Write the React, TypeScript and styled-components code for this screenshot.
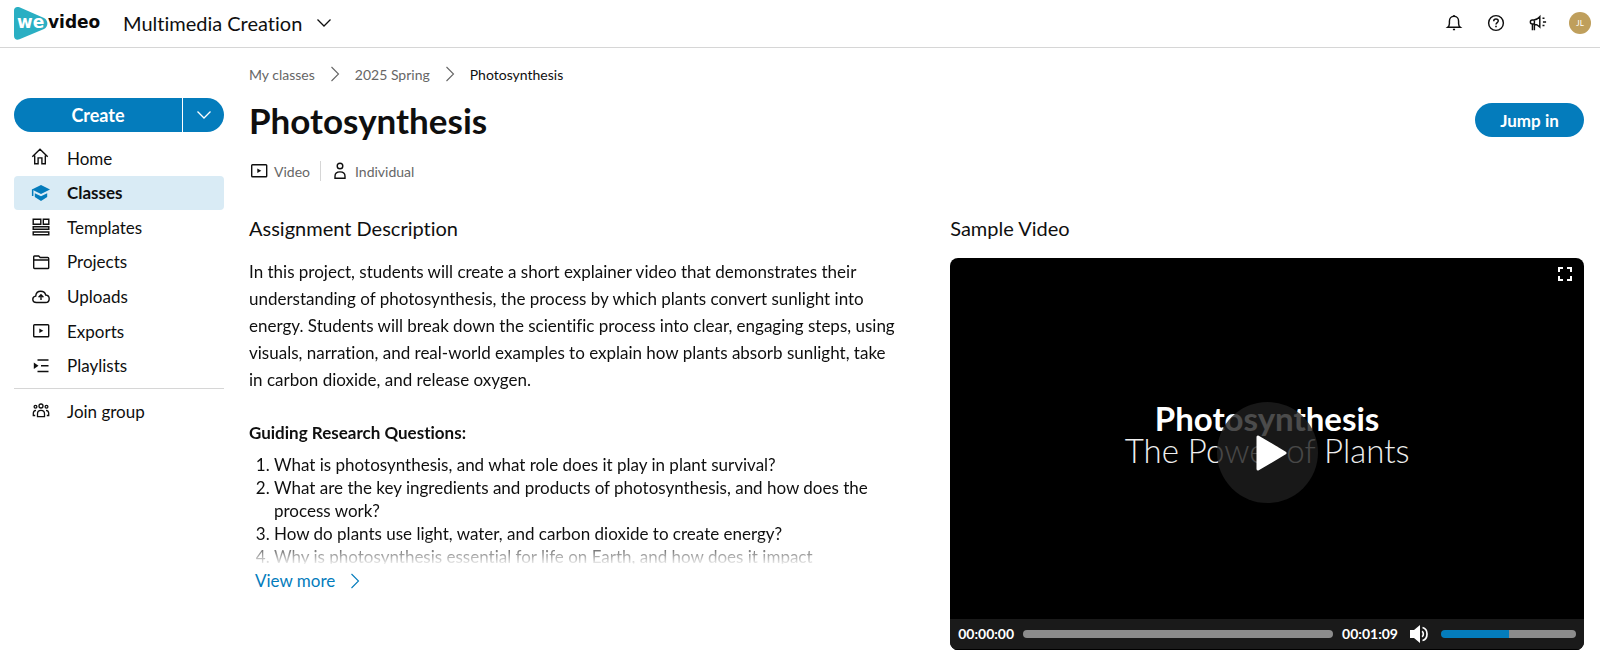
import React, { useState } from "react";
import styled, { createGlobalStyle } from "styled-components";

const GlobalStyle = createGlobalStyle`
  *, *::before, *::after { box-sizing: border-box; }
  body { margin: 0; background: #fff; color: #0f0f0f; font-family: Lato, "Liberation Sans", sans-serif; font-size: 17px; font-variant-ligatures: none; }
  button { font: inherit; color: inherit; border: 0; padding: 0; background: none; cursor: pointer; }
  a { color: inherit; text-decoration: none; }
  h1, h2, h3, p, ol, ul { margin: 0; padding: 0; }
  svg { display: block; flex: none; }
`;

const Header = styled.header`
  display: flex;
  align-items: center;
  height: 48px;
  padding: 0 9px 2px 14px;
  border-bottom: 1px solid #d6d6d6;
`;
const Switcher = styled.button`
  display: flex;
  align-items: center;
  gap: 14px;
  margin-left: 21px;
  font-size: 20px;
  line-height: 24px;
`;
const HeaderTools = styled.div`
  display: flex;
  align-items: center;
  gap: 20px;
  margin-left: auto;
`;
const ToolButton = styled.button`
  display: flex;
  justify-content: center;
  width: 22px;
`;
const Avatar = styled.button`
  width: 22px;
  height: 22px;
  border-radius: 50%;
  background: #bf9f5c;
  color: #fff;
  font-size: 8px;
  line-height: 22px;
`;
const Body = styled.div`
  display: flex;
  gap: 25px;
  padding: 0 16px 0 14px;
`;
const Sidebar = styled.aside`
  flex: none;
  width: 210px;
  padding-top: 50px;
`;
const SplitButton = styled.div`
  display: flex;
  gap: 1px;
  height: 34px;
  border-radius: 17px;
  overflow: hidden;
  margin-bottom: 9px;
`;
const SplitPart = styled.button<{ $wide?: boolean }>`
  display: flex;
  align-items: center;
  justify-content: center;
  flex: ${(p) => (p.$wide ? "1" : "none")};
  width: ${(p) => (p.$wide ? "auto" : "41px")};
  background: #047cbc;
  color: #fff;
  font-size: 18px;
  font-weight: 700;
`;
const NavList = styled.ul`
  display: flex;
  flex-direction: column;
  justify-content: space-between;
  height: 242px;
  list-style: none;
`;
const NavLink = styled.a<{ $active?: boolean }>`
  display: flex;
  align-items: center;
  gap: 16px;
  height: 34px;
  padding-left: 17px;
  border-radius: 4px;
  font-weight: ${(p) => (p.$active ? 700 : 400)};
  background: ${(p) => (p.$active ? "#d9ebf5" : "transparent")};
`;
const NavDivider = styled.hr`
  margin: 5px 0;
  border: 0;
  border-top: 1px solid #d6d6d6;
`;
const Main = styled.main`
  flex: 1;
  min-width: 0;
  padding-top: 17px;
`;
const Crumbs = styled.nav`
  display: flex;
  align-items: center;
  gap: 15px;
  height: 18px;
  font-size: 14px;
  color: #666;
`;
const Crumb = styled.a<{ $current?: boolean }>`
  color: ${(p) => (p.$current ? "#0f0f0f" : "inherit")};
`;
const TitleRow = styled.div`
  display: flex;
  align-items: center;
  justify-content: space-between;
  height: 44px;
  margin-top: 15px;
`;
const Title = styled.h1`
  font-size: 35px;
  line-height: 44px;
  font-weight: 700;
`;
const PrimaryButton = styled.button`
  width: 109px;
  height: 34px;
  border-radius: 17px;
  background: #047cbc;
  color: #fff;
  font-weight: 700;
`;
const Meta = styled.div`
  display: flex;
  height: 20px;
  margin-top: 19px;
  font-size: 14px;
  color: #666;
  svg { color: #0f0f0f; }
`;
const MetaItem = styled.span`
  display: flex;
  align-items: center;
  gap: 5px;
  padding-right: 10px;
  & + & { padding-left: 9px; border-left: 1px solid #d6d6d6; }
`;
const Columns = styled.div`
  display: grid;
  grid-template-columns: 20fr 19fr;
  gap: 34px;
  margin-top: 35px;
`;
const SectionTitle = styled.h2`
  font-size: 20px;
  line-height: 24px;
  font-weight: 400;
`;
const Excerpt = styled.div`
  height: 306px;
  margin-top: 18px;
  padding-right: 18px;
  overflow: hidden;
  mask-image: linear-gradient(#000 280px, transparent 308px);
`;
const Paragraph = styled.p`
  line-height: 27px;
`;
const Subhead = styled.h3`
  margin: 28px 0 8px;
  font-size: 17px;
  line-height: 24px;
  font-weight: 700;
`;
const Questions = styled.ol`
  padding-left: 25px;
  line-height: 23px;
`;
const ViewMore = styled.button`
  display: flex;
  align-items: center;
  gap: 15px;
  margin-top: 6px;
  padding-left: 6px;
  color: #047cbc;
  line-height: 22px;
`;
const Player = styled.div`
  display: flex;
  flex-direction: column;
  margin-top: 18px;
  border-radius: 8px;
  overflow: hidden;
  background: #000;
  color: #fff;
`;
const Screen = styled.div`
  position: relative;
  display: flex;
  flex-direction: column;
  align-items: center;
  justify-content: center;
  aspect-ratio: 634 / 361;
  padding-bottom: 8px;
`;
const Slide = styled.div<{ $strong?: boolean }>`
  font-size: 33px;
  line-height: 32px;
  font-weight: ${(p) => (p.$strong ? 700 : 300)};
  color: ${(p) => (p.$strong ? "#fff" : "#eee")};
`;
const PlayButton = styled.button`
  position: absolute;
  top: 144px;
  left: calc(50% - 50px);
  display: flex;
  align-items: center;
  justify-content: center;
  width: 101px;
  height: 101px;
  padding-left: 6px;
  border-radius: 50%;
  background: rgba(30, 30, 30, 0.8);
`;
const FullscreenButton = styled.button`
  position: absolute;
  top: 9px;
  right: 12px;
`;
const Controls = styled.div`
  display: flex;
  align-items: center;
  height: 31px;
  padding: 0 8px;
  background: #1a1a1a;
  border-bottom: 1px solid #000;
  font-size: 14px;
  font-weight: 700;
`;
const Track = styled.input<{ $fill: number }>`
  appearance: none;
  height: 8px;
  min-width: 0;
  margin: 0;
  border-radius: 4px;
  background: linear-gradient(to right, #047cbc ${(p) => p.$fill}%, #8c8c8c ${(p) => p.$fill}%);
  &::-webkit-slider-thumb { appearance: none; width: 1px; height: 8px; }
`;
const Seek = styled(Track)`
  flex: 1;
  margin: 0 9px;
`;
const Volume = styled(Track)`
  width: 135px;
  margin-left: 11px;
`;
const Mute = styled.button`
  margin-left: 12px;
`;

type IconProps = { size?: number; children: React.ReactNode; width?: number };
const Icon = ({ size = 20, children, width = 1.4 }: IconProps) => (
  <svg width={size} height={size} viewBox="0 0 20 20" fill="none" stroke="currentColor" strokeWidth={width} aria-hidden="true">
    {children}
  </svg>
);

const ChevronDown = () => (
  <svg width="16" height="10" viewBox="0 0 16 10" fill="none" stroke="currentColor" strokeWidth="1.3" aria-hidden="true">
    <path d="M1.500 1.500l6.500 6.500 6.500-6.500" />
  </svg>
);
const ChevronRight = () => (
  <svg width="10" height="16" viewBox="0 0 10 16" fill="none" stroke="currentColor" strokeWidth="1.1" aria-hidden="true">
    <path d="M1.5 1l7 7-7 7" />
  </svg>
);
const VideoIcon = () => (
  <Icon>
    <rect x="2.7" y="3.7" width="15" height="12" rx="0.8" />
    <path d="M8.3 7.4v4.6l4-2.3z" fill="currentColor" stroke="none" />
  </Icon>
);
const PersonIcon = () => (
  <Icon>
    <circle cx="10" cy="5" r="2.8" />
    <path d="M5 17.300v-2.100c0-2.500 1.600-4.300 5-4.300s5 1.800 5 4.300v2.100z" />
  </Icon>
);

const Logo = () => (
  <svg width="88" height="36" viewBox="0 0 88 36" role="img" aria-label="wevideo">
    <path d="M0 5.500C0 2.500 2.500 1.200 5.500 2.300L30 13C34.500 15.500 34.500 21.500 30 24L5.500 34.300C2.500 35.300 0 34 0 31Z" fill="#2aafc3" />
    <text x="3" y="23" fontFamily="DejaVu Sans, sans-serif" fontWeight="700" fontSize="17" fill="#fff">we</text>
    <text x="34" y="23" fontFamily="DejaVu Sans, sans-serif" fontWeight="700" fontSize="17" fill="#0a0a0a">video</text>
  </svg>
);

const navItems = [
  {
    label: "Home",
    icon: (
      <Icon>
        <path d="M1.300 8.800L9 1.200l7.700 7.600M3.700 7.500v8.200h3.400V9.900h3.800v5.800h3.400V7.500" />
      </Icon>
    ),
  },
  {
    label: "Classes",
    icon: (
      <Icon>
        <g fill="#047cbc" stroke="none">
          <path d="M10 2L.900 6.400 10 10.900l9-4.500z" />
          <path d="M3.800 10.200L10 13.300l6.200-3.100v3.700L10 17.900l-6.200-4z" />
          <path d="M.900 6.400h1.500v6.600H.900z" />
        </g>
      </Icon>
    ),
  },
  {
    label: "Templates",
    icon: (
      <Icon>
        <path d="M2.200 2.200h7.600v5H2.200zM12.300 2.200h5.500v5h-5.500zM2.200 9.800h15.600v2.400H2.200zM2.200 15h15.600v2.700H2.200z" />
      </Icon>
    ),
  },
  {
    label: "Projects",
    icon: (
      <Icon>
        <path d="M2.700 15.500V4.800c0-.5.300-.8.800-.8h4.200l1.500 1.500h7.500c.600 0 1 .4 1 1v9.200c0 .4-.3.800-.8.800H3.500c-.5 0-.8-.4-.8-1zM2.700 8h15" />
      </Icon>
    ),
  },
  {
    label: "Uploads",
    icon: (
      <Icon>
        <path d="M5.500 15.500c-2.200 0-3.700-1.400-3.700-3.200 0-1.700 1.200-3 2.900-3.200C5 6.300 7 4.300 9.700 4.300c2.400 0 4.400 1.500 5 3.700 2 .2 3.500 1.700 3.500 3.700 0 2.200-1.500 3.800-3.700 3.800z" />
        <path d="M10 13V8M7.600 10.200L10 7.800l2.400 2.400" />
      </Icon>
    ),
  },
  { label: "Exports", icon: <VideoIcon /> },
  {
    label: "Playlists",
    icon: (
      <Icon>
        <path d="M6.500 4h11M10 9.700h7.500M6.500 15.500h11" />
        <path d="M2.800 6.500v6.600l4.700-3.300z" fill="currentColor" stroke="none" />
      </Icon>
    ),
  },
];

const GroupIcon = () => (
  <Icon width={1.3}>
    <circle cx="10" cy="5" r="2" />
    <circle cx="4.500" cy="5.800" r="1.400" />
    <circle cx="15.500" cy="5.800" r="1.400" />
    <path d="M6.500 15.700v-3c0-2 1.300-3.300 3.500-3.300s3.500 1.300 3.500 3.300v3zM5 9.300c-1.800.2-2.700 1.300-2.700 3v2.200h1.900M15 9.300c1.800.2 2.700 1.300 2.700 3v2.200h-1.900" />
  </Icon>
);

export default function App() {
  const [time, setTime] = useState(0);
  const [volume, setVolume] = useState(50);
  return (
    <>
      <GlobalStyle />
      <Header>
        <a href="#home"><Logo /></a>
        <Switcher type="button">Multimedia Creation <ChevronDown /></Switcher>
        <HeaderTools>
          <ToolButton type="button" aria-label="Notifications">
            <Icon size={18} width={1.6}>
              <path d="M3 14.800c1.300-1 1.900-2.300 1.900-4.300V8c0-3 2-5.400 5.100-5.400S15.100 5 15.100 8v2.500c0 2 .6 3.300 1.900 4.300z" />
              <path d="M10 2.600V1M8.800 17.300h2.400" />
            </Icon>
          </ToolButton>
          <ToolButton type="button" aria-label="Help">
            <Icon size={18} width={1.6}>
              <circle cx="10" cy="10" r="8.200" />
              <path d="M7.500 8c0-1.500 1-2.400 2.500-2.400s2.500.9 2.500 2.200c0 1.700-2.500 1.800-2.500 3.800" />
              <path d="M10 13v1.800" strokeWidth="1.800" />
            </Icon>
          </ToolButton>
          <ToolButton type="button" aria-label="Announcements">
            <Icon size={18} width={1.6}>
              <path d="M12 3v11.500C10 12.500 8 11.400 5.500 11.200H3.700c-1.600 0-2.200-1-2.200-2.300s.6-2.300 2.200-2.300h1.800C8 6.400 10 5.200 12 3zM6 6.600v4.600M3.800 11.200V18M6 11.200V18" />
              <path d="M15.500 8.800h3.500M15 4.800h2.200M15 12.800h2.200" />
            </Icon>
          </ToolButton>
          <Avatar type="button" aria-label="Account JL">JL</Avatar>
        </HeaderTools>
      </Header>
      <Body>
        <Sidebar>
          <SplitButton>
            <SplitPart type="button" $wide>Create</SplitPart>
            <SplitPart type="button" aria-label="More create options"><ChevronDown /></SplitPart>
          </SplitButton>
          <nav aria-label="Main">
            <NavList>
              {navItems.map((item) => (
                <li key={item.label}>
                  <NavLink href={`#${item.label.toLowerCase()}`} $active={item.label === "Classes"}>
                    {item.icon}
                    {item.label}
                  </NavLink>
                </li>
              ))}
            </NavList>
            <NavDivider />
            <NavLink href="#join"><GroupIcon />Join group</NavLink>
          </nav>
        </Sidebar>
        <Main>
          <Crumbs aria-label="Breadcrumb">
            <Crumb href="#classes">My classes</Crumb>
            <ChevronRight />
            <Crumb href="#spring">2025 Spring</Crumb>
            <ChevronRight />
            <Crumb href="#photosynthesis" $current>Photosynthesis</Crumb>
          </Crumbs>
          <TitleRow>
            <Title>Photosynthesis</Title>
            <PrimaryButton type="button">Jump in</PrimaryButton>
          </TitleRow>
          <Meta>
            <MetaItem><VideoIcon />Video</MetaItem>
            <MetaItem><PersonIcon />Individual</MetaItem>
          </Meta>
          <Columns>
            <section>
              <SectionTitle>Assignment Description</SectionTitle>
              <Excerpt>
                <Paragraph>
                  In this project, students will create a short explainer video that demonstrates their
                  understanding of photosynthesis, the process by which plants convert sunlight into
                  energy. Students will break down the scientific process into clear, engaging steps, using
                  visuals, narration, and real-world examples to explain how plants absorb sunlight, take
                  in carbon dioxide, and release oxygen.
                </Paragraph>
                <Subhead>Guiding Research Questions:</Subhead>
                <Questions>
                  <li>What is photosynthesis, and what role does it play in plant survival?</li>
                  <li>What are the key ingredients and products of photosynthesis, and how does the process work?</li>
                  <li>How do plants use light, water, and carbon dioxide to create energy?</li>
                  <li>Why is photosynthesis essential for life on Earth, and how does it impact</li>
                </Questions>
              </Excerpt>
              <ViewMore type="button">View more <ChevronRight /></ViewMore>
            </section>
            <section>
              <SectionTitle>Sample Video</SectionTitle>
              <Player>
                <Screen>
                  <Slide $strong>Photosynthesis</Slide>
                  <Slide>The Power of Plants</Slide>
                  <PlayButton type="button" aria-label="Play">
                    <svg width="32" height="38" viewBox="0 0 32 38" aria-hidden="true">
                      <path d="M3 3v32l27-16z" fill="#fff" stroke="#fff" strokeWidth="3" strokeLinejoin="round" />
                    </svg>
                  </PlayButton>
                  <FullscreenButton type="button" aria-label="Full screen">
                    <svg width="14" height="14" viewBox="0 0 14 14" fill="none" stroke="#fff" strokeWidth="2" aria-hidden="true">
                      <path d="M1 5V1h4M9 1h4v4M13 9v4H9M5 13H1V9" />
                    </svg>
                  </FullscreenButton>
                </Screen>
                <Controls>
                  <span>00:00:00</span>
                  <Seek type="range" aria-label="Seek" min={0} max={69} value={time} $fill={(time / 69) * 100} onChange={(e) => setTime(Number(e.target.value))} />
                  <span>00:01:09</span>
                  <Mute type="button" aria-label="Mute">
                    <svg width="20" height="20" viewBox="0 0 20 20" fill="none" stroke="#fff" strokeWidth="1.700" aria-hidden="true">
                      <path d="M0 6h4l6-5v18l-6-5H0z" fill="#fff" stroke="none" />
                      <path d="M12 7.200c1.800 1 1.800 4.600 0 5.600M12.500 3.500c6 1.500 6 11.500 0 13" />
                    </svg>
                  </Mute>
                  <Volume type="range" aria-label="Volume" min={0} max={100} value={volume} $fill={volume} onChange={(e) => setVolume(Number(e.target.value))} />
                </Controls>
              </Player>
            </section>
          </Columns>
        </Main>
      </Body>
    </>
  );
}
